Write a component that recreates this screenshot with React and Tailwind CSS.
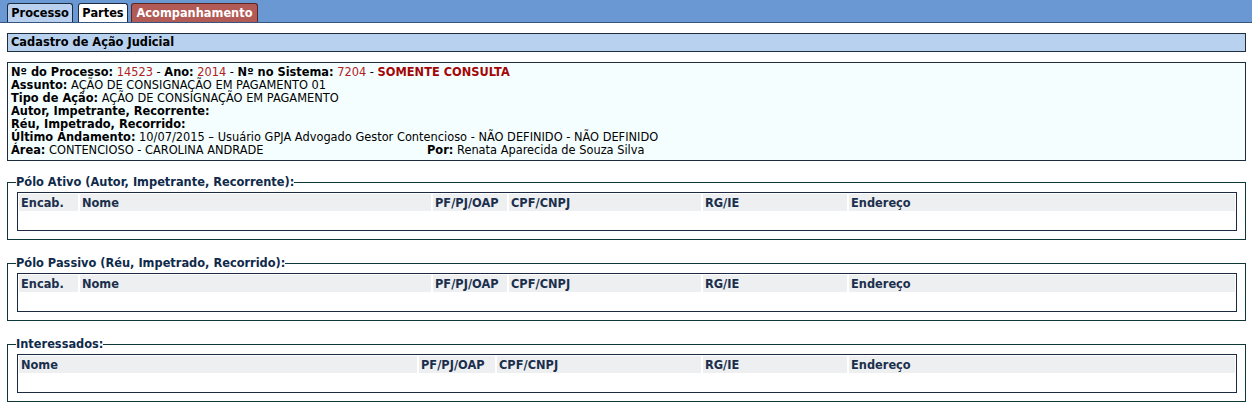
import React from 'react';

const font = { fontFamily: '"DejaVu Sans", Verdana, sans-serif' };

function Tabs() {
  return (
    <div className="h-[23px] bg-[#6a98d2] border-b border-[#35557f] flex items-end pl-[7px]">
      <div className="h-[19px] w-[66px] text-center bg-[#b9d1ee] border border-b-0 border-[#1d2c44] rounded-t-[3px] font-bold text-black leading-[18px]">Processo</div>
      <div className="h-[19px] w-[50px] ml-[5px] text-center bg-white border border-b-0 border-[#1d2c44] rounded-t-[3px] font-bold text-black leading-[18px]">Partes</div>
      <div className="h-[19px] w-[127px] ml-[3px] text-center bg-[#b25a55] border border-b-0 border-[#5c2522] rounded-t-[3px] font-bold text-white leading-[18px]">Acompanhamento</div>
    </div>
  );
}

function Lbl({ children }) {
  return <span className="font-bold">{children}</span>;
}

function Red({ children }) {
  return <span className="text-[#b3201c]">{children}</span>;
}

function InfoBox() {
  return (
    <div className="mt-[10px] border border-[#1e2d3d] bg-[#f5feff] px-[3px] py-[3px] leading-[13px] text-black">
      <div>
        <Lbl>Nº do Processo:</Lbl> <Red>14523</Red> - <Lbl>Ano:</Lbl> <Red>2014</Red> - <Lbl>Nº no Sistema:</Lbl> <Red>7204</Red> - <span className="font-bold text-[#a30606]">SOMENTE CONSULTA</span>
      </div>
      <div><Lbl>Assunto:</Lbl> AÇÃO DE CONSIGNAÇÃO EM PAGAMENTO 01</div>
      <div><Lbl>Tipo de Ação:</Lbl> AÇÃO DE CONSIGNAÇÃO EM PAGAMENTO</div>
      <div><Lbl>Autor, Impetrante, Recorrente:</Lbl></div>
      <div><Lbl>Réu, Impetrado, Recorrido:</Lbl></div>
      <div><Lbl>Último Andamento:</Lbl> 10/07/2015 – Usuário GPJA Advogado Gestor Contencioso - NÃO DEFINIDO - NÃO DEFINIDO</div>
      <div className="flex">
        <div className="w-[416px]"><Lbl>Área:</Lbl> CONTENCIOSO - CAROLINA ANDRADE</div>
        <div><Lbl>Por:</Lbl> Renata Aparecida de Souza Silva</div>
      </div>
    </div>
  );
}

function PartTable({ cols, template }) {
  return (
    <div className="ml-px border border-[#1d2a44] bg-white p-px">
      <div className={`grid ${template} gap-x-[2px]`}>
        {cols.map((c) => (
          <div key={c} className="bg-[#eeeff1] h-[17px] px-[2px] leading-[18px] font-bold text-[#1b2f4d] whitespace-nowrap">
            {c}
          </div>
        ))}
      </div>
      <div className="h-[18px]" />
    </div>
  );
}

function Polo({ title, cols, template, className }) {
  return (
    <fieldset className={`border border-[#0e3838] px-2 pb-[8px] pt-[3px] ${className}`}>
      <legend className="font-bold text-[#0f2a4a] leading-[13px]">{title}</legend>
      <PartTable cols={cols} template={template} />
    </fieldset>
  );
}

export default function App() {
  const full = ['Encab.', 'Nome', 'PF/PJ/OAP', 'CPF/CNPJ', 'RG/IE', 'Endereço'];
  const semEncab = ['Nome', 'PF/PJ/OAP', 'CPF/CNPJ', 'RG/IE', 'Endereço'];

  return (
    <div className="bg-white min-h-[420px] text-[11.4px]" style={font}>
      <Tabs />
      <div className="pl-[7px] pr-[6px]">
        {/* cabeçalho */}
        <div className="mt-[10px] h-[19px] border border-[#1e2d3d] bg-[#b8d1ee] px-[3px] leading-[17px] font-bold text-black">
          Cadastro de Ação Judicial
        </div>

        <InfoBox />

        <Polo
          className="mt-[15px]"
          title="Pólo Ativo (Autor, Impetrante, Recorrente):"
          cols={full}
          template="grid-cols-[59px_351px_74px_192px_144px_1fr]"
        />
        <Polo
          className="mt-[17px]"
          title="Pólo Passivo (Réu, Impetrado, Recorrido):"
          cols={full}
          template="grid-cols-[59px_351px_74px_192px_144px_1fr]"
        />
        <Polo
          className="mt-[17px]"
          title="Interessados:"
          cols={semEncab}
          template="grid-cols-[398px_76px_204px_144px_1fr]"
        />
      </div>
    </div>
  );
}
